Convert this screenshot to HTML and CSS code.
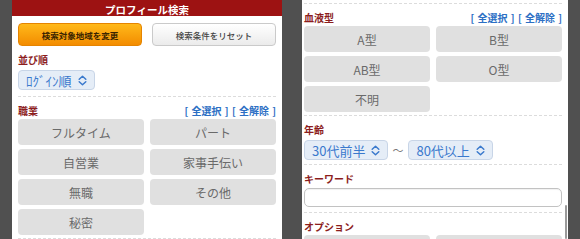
FILE: index.html
```html
<!DOCTYPE html>
<html lang="ja">
<head>
<meta charset="utf-8">
<title>プロフィール検索</title>
<link rel="stylesheet" href="styles.css">
</head>
<body>
<div class="screen left">
  <div class="titlebar">プロフィール検索</div>
  <div class="inner">
    <div class="actions">
      <button class="btn btn-orange">検索対象地域を変更</button>
      <button class="btn btn-reset">検索条件をリセット</button>
    </div>
    <section class="sec first sec-sort">
      <div class="head"><span class="label">並び順</span></div>
      <div class="select-row">
        <span class="select">ﾛｸﾞｲﾝ順<svg class="chev" viewBox="0 0 9 11" width="9" height="11"><path d="M1.2 4.2 L4.5 1.2 L7.8 4.2 M1.2 6.8 L4.5 9.8 L7.8 6.8"/></svg></span>
      </div>
    </section>
    <section class="sec">
      <div class="head"><span class="label">職業</span><span class="links">[ 全選択 ] [ 全解除 ]</span></div>
      <div class="grid">
        <div class="opt">フルタイム</div>
        <div class="opt">パート</div>
        <div class="opt">自営業</div>
        <div class="opt">家事手伝い</div>
        <div class="opt">無職</div>
        <div class="opt">その他</div>
        <div class="opt">秘密</div>
      </div>
    </section>
    <section class="sec"></section>
  </div>
</div>
<div class="screen right">
  <section class="sec">
    <div class="head"><span class="label">血液型</span><span class="links">[ 全選択 ] [ 全解除 ]</span></div>
    <div class="grid">
      <div class="opt">A型</div>
      <div class="opt">B型</div>
      <div class="opt">AB型</div>
      <div class="opt">O型</div>
      <div class="opt">不明</div>
    </div>
  </section>
  <section class="sec sec-age">
    <div class="head"><span class="label">年齢</span></div>
    <div class="select-row">
      <span class="select">30代前半<svg class="chev" viewBox="0 0 9 11" width="9" height="11"><path d="M1.2 4.2 L4.5 1.2 L7.8 4.2 M1.2 6.8 L4.5 9.8 L7.8 6.8"/></svg></span>
      <span class="tilde">〜</span>
      <span class="select">80代以上<svg class="chev" viewBox="0 0 9 11" width="9" height="11"><path d="M1.2 4.2 L4.5 1.2 L7.8 4.2 M1.2 6.8 L4.5 9.8 L7.8 6.8"/></svg></span>
    </div>
  </section>
  <section class="sec sec-key">
    <div class="head"><span class="label">キーワード</span></div>
    <input class="keyword" type="text">
  </section>
  <section class="sec">
    <div class="head"><span class="label">オプション</span></div>
    <div class="grid">
      <div class="opt"></div>
      <div class="opt"></div>
    </div>
  </section>
  <div class="scrollbar"></div>
</div>
</body>
</html>
```
FILE: styles.css
```css
* { box-sizing: border-box; margin: 0; padding: 0; }
html, body { height: 239px; overflow: hidden; }
body {
  background: #505050;
  font-family: "Noto Sans CJK JP", "Noto Sans", sans-serif;
  display: flex;
  gap: 20px;
  padding-left: 12px;
}
.screen {
  background: #fff;
  height: 239px;
  overflow: hidden;
  position: relative;
}
.left { width: 270px; }
.right { width: 266px; padding: 3px 6px 0 2px; }

.titlebar {
  height: 16px;
  background: #9d1212;
  color: #fff;
  font-weight: bold;
  font-size: 10.5px;
  line-height: 19px;
  text-align: center;
  overflow: hidden;
}
.inner { padding: 7px 6px 0; }

.actions {
  display: grid;
  grid-template-columns: 1fr 1fr;
  gap: 10px;
}
.btn {
  height: 23px;
  border-radius: 4px;
  font-family: inherit;
  font-size: 8.5px;
  display: flex;
  align-items: center;
  justify-content: center;
}
.btn-orange {
  background: linear-gradient(#ffb91a, #f38c00);
  border: 1px solid #e58400;
  color: #3a2400;
  font-weight: bold;
}
.btn-reset {
  background: linear-gradient(#ffffff, #ebebeb);
  border: 1px solid #cacaca;
  color: #444;
  font-weight: 500;
}

.sec {
  border-top: 1px dashed #dcdcdc;
  padding: 6px 0 3px;
}
.sec.first { border-top: none; }
.head {
  display: flex;
  justify-content: space-between;
  align-items: center;
  height: 14px;
  margin-bottom: 2px;
}
.label {
  font-size: 10px;
  font-weight: bold;
  color: #8c1d1d;
}
.links {
  font-size: 10px;
  font-weight: bold;
  color: #2c6fc4;
  word-spacing: 1px;
}

.sec-sort .head, .sec-age .head { margin-bottom: 4px; }
.sec-sort { padding-bottom: 6px; }
.sec-age { padding-bottom: 4px; }
.sec-key .head { margin-bottom: 3px; }
.sec-key { padding-bottom: 5px; }

.select-row {
  display: flex;
  align-items: center;
}
.select {
  display: inline-flex;
  align-items: center;
  gap: 6px;
  height: 20px;
  padding: 0 7px 0 7px;
  background: #e5edf7;
  border: 1px solid #c8d5e7;
  border-radius: 4px;
  color: #3a79cd;
  font-size: 13px;
}
.chev {
  fill: none;
  stroke: #3a79cd;
  stroke-width: 1.5;
  stroke-linecap: round;
  stroke-linejoin: round;
}
.tilde {
  font-size: 11px;
  color: #777;
  margin: 0 5px 0 4px;
}

.grid {
  display: grid;
  grid-template-columns: 1fr 1fr;
  gap: 4px 6px;
}
.opt {
  height: 26px;
  background: #e0e0e0;
  border-radius: 4px;
  color: #6a6a6a;
  font-size: 12px;
  display: flex;
  align-items: center;
  justify-content: center;
}

.keyword {
  display: block;
  width: 100%;
  height: 19px;
  border: 1px solid #c2c2c2;
  border-radius: 5px;
  background: #fff;
  box-shadow: inset 0 1px 1px rgba(0,0,0,0.06);
}

.scrollbar {
  position: absolute;
  left: 263px;
  top: 205px;
  bottom: 0;
  width: 2px;
  background: #9a9a9a;
  border-radius: 1px;
}
```
